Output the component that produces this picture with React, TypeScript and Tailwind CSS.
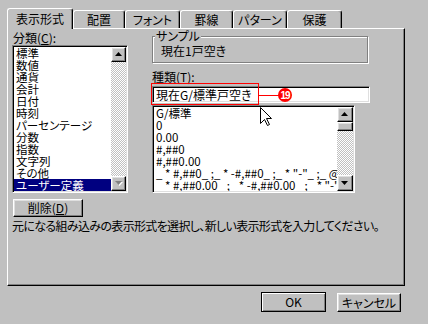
import React from 'react';

const raised =
  'border border-t-white border-l-white border-r-black border-b-black shadow-[inset_-1px_-1px_0_#808080,inset_1px_1px_0_#dfdfdf]';
const sunken =
  'border border-t-[#808080] border-l-[#808080] border-r-white border-b-white shadow-[inset_1px_1px_0_#000,inset_-1px_-1px_0_#dfdfdf] p-px';
const checker = 'bg-[repeating-conic-gradient(#c0c0c0_0_25%,#fff_0_50%)] bg-[length:2px_2px]';

const tabs = [
  { label: '表示形式', cls: 'w-[66px] h-[21px] -mb-px z-10' },
  { label: '配置', cls: 'w-[52px] h-[18px]' },
  { label: 'フォント', cls: 'w-[55px] h-[18px]' },
  { label: '罫線', cls: 'w-[53px] h-[18px]' },
  { label: 'パターン', cls: 'w-[54px] h-[18px]' },
  { label: '保護', cls: 'w-[55px] h-[18px]' }
];

const categories = [
  '標準', '数値', '通貨', '会計', '日付', '時刻',
  'パーセンテージ', '分数', '指数', '文字列', 'その他', 'ユーザー定義'
];

const formats = [
  'G/標準',
  '0',
  '0.00',
  '#,##0',
  '#,##0.00',
  '_ * #,##0_ ;_ * -#,##0_ ;_ * "-"_ ;_ @_ ',
  '_ * #,##0.00_ ;_ * -#,##0.00_ ;_ * "-"??_ ;_ @_ '
];

function Arrow({ down, disabled }: { down?: boolean; disabled?: boolean }) {
  const pts = down ? '0,0 7,0 3.5,4' : '3.5,0 7,4 0,4';
  return (
    <svg width="8" height="5" viewBox="0 0 8 5">
      {disabled && <polygon points={pts} fill="#fff" transform="translate(1 1)" />}
      <polygon points={pts} fill={disabled ? '#808080' : '#000'} />
    </svg>
  );
}

function ScrollButton({ down, disabled, h }: { down?: boolean; disabled?: boolean; h: string }) {
  return (
    <div className={`${raised} ${h} flex items-center justify-center bg-[#c0c0c0]`}>
      <Arrow down={down} disabled={disabled} />
    </div>
  );
}

export default function App() {
  return (
    <div className="relative h-[324px] w-[428px] overflow-hidden bg-[#c0c0c0] pl-[7px] pt-[8px] font-['Noto_Sans_CJK_JP',sans-serif] text-[12px] leading-[14px] text-black [font-feature-settings:'palt']">
      {/* tabs */}
      <div className="flex h-[20px] items-end">
        {tabs.map((t) => (
          <div
            key={t.label}
            className={`relative flex items-center justify-center rounded-t-[3px] border-l border-r border-t border-l-white border-r-black border-t-white bg-[#c0c0c0] shadow-[inset_-1px_0_0_#808080] ${t.cls}`}
          >
            {t.label}
          </div>
        ))}
      </div>

      {/* tab body */}
      <div className="h-[258px] w-[398px] border border-b-black border-l-white border-r-black border-t-white pl-[4px] pt-[2px] shadow-[inset_-1px_-1px_0_#808080]">
        <div className="flex">
          {/* left column */}
          <div className="flex w-[116px] flex-col">
            <div className="pl-px">
              分類(<span className="underline underline-offset-1">C</span>):
            </div>
            <div className={`${sunken} flex h-[148px] bg-white`}>
              <div className="flex-1 overflow-hidden">
                {categories.map((c, i) => (
                  <div
                    key={c}
                    className={`h-[12px] whitespace-nowrap pl-[2px] text-[11.5px] leading-[12px] ${
                      i === categories.length - 1 ? 'bg-[#000080] text-white' : ''
                    }`}
                  >
                    {c}
                  </div>
                ))}
              </div>
              <div className={`flex w-[15px] flex-col ${checker}`}>
                <ScrollButton h="h-[15px]" />
                <div className="flex-1" />
                <ScrollButton down disabled h="h-[15px]" />
              </div>
            </div>
            <button className={`${raised} mt-[6px] ml-px h-[18px] w-[70px] bg-[#c0c0c0] text-[12px] leading-[14px]`}>
              削除(<span className="underline underline-offset-1">D</span>)
            </button>
          </div>

          {/* right column */}
          <div className="ml-[24px] flex w-[218px] flex-col">
            <div className="relative mt-[5px] h-[27px] w-[216px] border border-[#808080] pl-[8px] pt-[8px] shadow-[inset_1px_1px_0_#fff,1px_1px_0_#fff]">
              <span className="absolute left-[2px] top-[-8px] bg-[#c0c0c0] px-px">サンプル</span>
              <div className="-mt-px">現在1戸空き</div>
            </div>
            <div className="mt-[7px]">
              種類(<span className="underline underline-offset-1">T</span>):
            </div>
            <div className="relative mt-[2px]">
              <div className={`${sunken} h-[17px] w-[218px] bg-white pl-[3px] leading-[13px]`}>現在G/標準戸空き</div>
              {/* annotation */}
              <div className="absolute left-[-1px] top-[-3px] h-[22px] w-[108px] border border-[#ff0000]" />
              <div className="absolute left-[107px] top-[9px] h-px w-[20px] bg-[#ff0000]" />
              <svg className="absolute left-[126px] top-[2px]" width="14" height="14" viewBox="0 0 14 14">
                <circle cx="7" cy="7" r="7" fill="#ff0000" />
                <text x="7" y="10.5" textAnchor="middle" fontSize="10" fontWeight="bold" fill="#fff" fontFamily="Liberation Sans, sans-serif" letterSpacing="-1">
                  19
                </text>
              </svg>
            </div>
            <div className={`${sunken} mt-[2px] flex h-[88px] w-[203px] bg-white`}>
              <div className="flex-1 overflow-hidden">
                {formats.map((f) => (
                  <div key={f} className="h-[12px] whitespace-pre pl-[2px] text-[11.5px] leading-[12px]">
                    {f}
                  </div>
                ))}
              </div>
              <div className={`flex w-[16px] flex-col ${checker}`}>
                <ScrollButton h="h-[15px]" />
                <div className={`${raised} h-[9px] bg-[#c0c0c0]`} />
                <div className="flex-1" />
                <ScrollButton down h="h-[16px]" />
              </div>
            </div>
          </div>
        </div>
        <div className="mt-[1px] whitespace-nowrap leading-[16px] tracking-[-0.65px]">
          元になる組み込みの表示形式を選択し、新しい表示形式を入力してください。
        </div>
      </div>

      {/* dialog buttons */}
      <div className="mt-[6px] flex items-start justify-end gap-[11px] pr-[27px]">
        <button className="h-[20px] w-[65px] border border-black bg-[#c0c0c0] text-[12px] shadow-[inset_1px_1px_0_#fff,inset_-1px_-1px_0_#808080]">
          OK
        </button>
        <button className={`${raised} mt-px h-[19px] w-[64px] bg-[#c0c0c0] text-[12px]`}>キャンセル</button>
      </div>

      {/* mouse pointer */}
      <svg className="absolute left-[260px] top-[107px]" width="13" height="20" viewBox="0 0 13 20">
        <path d="M0.5 0.5 L0.5 16.5 L4.5 12.5 L7.5 18.5 L9.5 17.5 L6.5 11.5 L11.5 11.5 Z" fill="#fff" stroke="#000" strokeWidth="1" />
      </svg>
    </div>
  );
}
